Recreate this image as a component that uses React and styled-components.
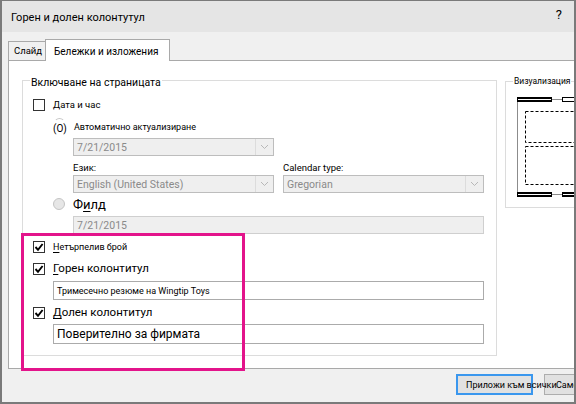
import React from "react";
import styled, { createGlobalStyle } from "styled-components";

const UI_FONT = `Roboto, "Noto Sans", "Liberation Sans", sans-serif`;

const GlobalStyle = createGlobalStyle`
  html, body { margin: 0; padding: 0; background: #ffffff; }
  body { font-family: ${UI_FONT}; color: #000; }
  *, *::before, *::after { box-sizing: border-box; }
`;

/* outer frame of the dialog window (clips the right-hand part of the dialog) */
const Frame = styled.div`
  width: 576px;
  height: 404px;
  border: solid #7a7a7a;
  border-width: 1px 2px 2px 2px;
  overflow: hidden;
  background: #f0f0f0;
`;

const Dialog = styled.div`
  width: 630px;
  display: flex;
  flex-direction: column;
  font-family: ${UI_FONT};
`;

const TitleBar = styled.div`
  height: 31px;
  background: #e5e5e5;
  display: flex;
  align-items: center;
  padding: 2px 0 0 9px;
`;

const Title = styled.div`
  flex: 1;
  font-size: 11px;
  white-space: nowrap;
`;

const Help = styled.div`
  align-self: flex-start;
  margin: 5px 70px 0 0;
  font-size: 13px;
  line-height: 14px;
`;

const Body = styled.div`
  display: flex;
  flex-direction: column;
  padding-top: 7px;
`;

const TabStrip = styled.div`
  display: flex;
  align-items: flex-end;
  height: 21px;
  margin-left: 6px;
`;

const Tab = styled.div`
  position: relative;
  display: flex;
  align-items: center;
  font-size: ${(p) => (p.$active ? 10 : 9.5)}px;
  white-space: nowrap;
  border: 1px solid #a9a9a9;
  border-bottom: none;
  ${(p) =>
    p.$active
      ? `
    z-index: 1;
    width: 125px;
    height: 22px;
    margin-bottom: -1px;
    padding: 1px 0 0 8px;
    background: #ffffff;
  `
      : `
    width: 37px;
    height: 19px;
    border-right: none;
    padding: 0 0 1px 5px;
    background: #f0f0f0;
  `}
`;

const Panel = styled.div`
  position: relative;
  margin-left: 6px;
  width: 614px;
  height: 309px;
  border: 1px solid #a9a9a9;
  background: #ffffff;
  padding: 19px 8px 0 13px;
`;

const Columns = styled.div`
  display: flex;
  align-items: flex-start;
  gap: 8px;
`;

const GroupBox = styled.div`
  position: relative;
  flex: none;
  width: ${(p) => p.$w}px;
  height: ${(p) => p.$h}px;
  margin-top: ${(p) => p.$mt || 0}px;
  border: 1px solid #dcdcdc;
  padding: ${(p) => p.$pad};
  display: flex;
  flex-direction: column;
`;

/* group caption sits over the top border line */
const Caption = styled.span`
  position: absolute;
  top: ${(p) => p.$top}px;
  left: ${(p) => p.$left}px;
  padding: 0 1px;
  background: #ffffff;
  font-size: ${(p) => p.$size}px;
  line-height: 14px;
  white-space: nowrap;
`;

const Row = styled.div`
  display: flex;
  align-items: center;
  gap: 8px;
  height: ${(p) => p.$h}px;
  margin-top: ${(p) => p.$mt}px;
  padding-left: ${(p) => p.$indent}px;
`;

const Label = styled.span`
  font-size: ${(p) => p.$size}px;
  line-height: 1;
  white-space: nowrap;
  u { text-underline-offset: 2px; }
`;

const CheckBox = styled.span`
  flex: none;
  width: 12px;
  height: 12px;
  border: 1px solid #333333;
  background: #ffffff;
  display: flex;
  align-items: center;
  justify-content: center;
`;

const RadioDot = styled.span`
  flex: none;
  width: 12px;
  height: 12px;
  border-radius: 50%;
  border: 1px solid #c4c4c4;
  background: #e6e6e6;
`;

/* radio drawn with a fallback "(O)" glyph under a faint ring */
const RadioText = styled.span`
  position: relative;
  flex: none;
  width: 13px;
  height: 14px;
  font-size: 10px;
  line-height: 1;
  display: flex;
  align-items: flex-end;
  white-space: nowrap;
  &::before {
    content: "";
    position: absolute;
    left: 1px;
    top: -2px;
    width: 11px;
    height: 11px;
    border-radius: 50%;
    border: 1px solid transparent;
    border-top-color: #c8c8c8;
  }
`;

const Combo = styled.div`
  display: flex;
  align-items: center;
  width: ${(p) => p.$w}px;
  height: 18px;
  border: 1px solid #bdbdbd;
  background: #efefef;
  color: #8a8a8a;
  font-size: 10.5px;
  padding-left: 3px;
  white-space: nowrap;
  span { flex: 1; }
`;

const ComboArrow = styled.span`
  flex: none !important;
  width: 18px;
  height: 100%;
  border-left: 1px solid #dcdcdc;
  display: flex;
  align-items: center;
  justify-content: center;
`;

const TextBox = styled.div`
  display: flex;
  align-items: center;
  width: ${(p) => p.$w}px;
  height: ${(p) => p.$h}px;
  margin-top: ${(p) => p.$mt}px;
  margin-left: ${(p) => p.$indent}px;
  border: 1px solid ${(p) => (p.$disabled ? "#cfcfcf" : "#ababab")};
  background: ${(p) => (p.$disabled ? "#efefef" : "#ffffff")};
  color: ${(p) => (p.$disabled ? "#8a8a8a" : "#000000")};
  font-size: ${(p) => p.$size}px;
  padding-left: 3px;
  white-space: nowrap;
`;

const LangGrid = styled.div`
  display: grid;
  grid-template-columns: 201px 201px;
  grid-template-rows: 12px 18px;
  column-gap: 9px;
  row-gap: 1px;
  margin-top: 6px;
  padding-left: 40px;
`;

const SmallLabel = styled.span`
  font-size: 9.5px;
  line-height: 12px;
  white-space: nowrap;
`;

const Preview = styled.svg`
  display: block;
  margin: 15px 0 0 11px;
`;

const Highlight = styled.div`
  position: absolute;
  left: 12px;
  top: 172px;
  width: 224px;
  height: 138px;
  border: 3px solid #e3148b;
  z-index: 2;
  pointer-events: none;
`;

const Footer = styled.div`
  display: flex;
  justify-content: flex-end;
  gap: 11px;
  margin-top: 5px;
  padding-right: 13px;
`;

const Button = styled.div`
  position: relative;
  z-index: ${(p) => (p.$focused ? 1 : 0)};
  flex: none;
  display: flex;
  align-items: center;
  width: ${(p) => p.$w}px;
  height: 21px;
  padding: 0 0 0 ${(p) => p.$pl}px;
  font-size: 9px;
  color: #000;
  background: #e1e1e1;
  border: ${(p) => (p.$focused ? "2px solid #3a97ee" : "1px solid #adadad")};
  white-space: nowrap;
  overflow: visible;
  cursor: default;
`;

const Check = () => (
  <svg width="10" height="10" viewBox="0 0 10 10">
    <polyline points="1.5,5 4,7.8 8.6,2" fill="none" stroke="#000" strokeWidth="1.9" />
  </svg>
);

const Chevron = () => (
  <svg width="9" height="6" viewBox="0 0 9 6">
    <polyline points="1,1 4.5,4.5 8,1" fill="none" stroke="#b8b8b8" strokeWidth="1" />
  </svg>
);

const PageLayout = () => (
  <Preview width="100" height="104" viewBox="0 0 100 104">
    {/* page edges */}
    <line x1="0.5" y1="2" x2="0.5" y2="100" stroke="#8c8c8c" />
    <line x1="34" y1="2.5" x2="46" y2="2.5" stroke="#8c8c8c" />
    <line x1="34" y1="97.5" x2="46" y2="97.5" stroke="#8c8c8c" />
    {/* header placeholders */}
    <rect x="0" y="0" width="35" height="5" fill="#000" />
    <line x1="1" y1="2.5" x2="34" y2="2.5" stroke="#fff" />
    <rect x="45.5" y="0.5" width="60" height="4" fill="#fff" stroke="#000" />
    {/* footer placeholders */}
    <rect x="0" y="95" width="35" height="5" fill="#000" />
    <line x1="1" y1="97.5" x2="34" y2="97.5" stroke="#fff" />
    <rect x="45" y="95" width="60" height="5" fill="#000" />
    <line x1="46" y1="97.5" x2="100" y2="97.5" stroke="#fff" />
    {/* body areas */}
    <rect x="8.5" y="14.5" width="100" height="31" fill="none" stroke="#000" strokeDasharray="3 2" />
    <rect x="8.5" y="49.5" width="100" height="38" fill="none" stroke="#000" strokeDasharray="3 2" />
  </Preview>
);

export default function App() {
  return (
    <>
      <GlobalStyle />
      <Frame>
        <Dialog>
          <TitleBar>
            <Title>Горен и долен колонтутул</Title>
            <Help>?</Help>
          </TitleBar>
          <Body>
            <TabStrip>
              <Tab>Слайд</Tab>
              <Tab $active>Бележки и изложения</Tab>
            </TabStrip>
            <Panel>
              <Columns>
                <GroupBox $w={475} $h={276} $pad="17px 0 0 10px">
                  <Caption $top={-5} $left={7} $size={10.5}>Включване на страницата</Caption>

                  <Row $h={14} $mt={0} $indent={0}>
                    <CheckBox />
                    <Label $size={9.5}>Дата и час</Label>
                  </Row>

                  <Row $h={14} $mt={8} $indent={20}>
                    <RadioText>(O)</RadioText>
                    <Label $size={9}>Автоматично актуализиране</Label>
                  </Row>

                  <Row $h={18} $mt={4} $indent={40}>
                    <Combo $w={201}>
                      <span>7/21/2015</span>
                      <ComboArrow><Chevron /></ComboArrow>
                    </Combo>
                  </Row>

                  <LangGrid>
                    <SmallLabel>Език:</SmallLabel>
                    <SmallLabel>Calendar type:</SmallLabel>
                    <Combo $w={201}>
                      <span>English (United States)</span>
                      <ComboArrow><Chevron /></ComboArrow>
                    </Combo>
                    <Combo $w={201}>
                      <span>Gregorian</span>
                      <ComboArrow><Chevron /></ComboArrow>
                    </Combo>
                  </LangGrid>

                  <Row $h={14} $mt={4} $indent={20}>
                    <RadioDot />
                    <Label $size={13}>Ф<u>и</u>лд</Label>
                  </Row>

                  <TextBox $w={411} $h={18} $mt={5} $indent={40} $size={10.5} $disabled>
                    7/21/2015
                  </TextBox>

                  <Row $h={14} $mt={6} $indent={0}>
                    <CheckBox><Check /></CheckBox>
                    <Label $size={9}><u>Н</u>етърпелив брой</Label>
                  </Row>

                  <Row $h={14} $mt={8} $indent={0}>
                    <CheckBox><Check /></CheckBox>
                    <Label $size={11.5}><u>Г</u>орен колонтитул</Label>
                  </Row>

                  <TextBox $w={431} $h={19} $mt={5} $indent={20} $size={9}>
                    Тримесечно резюме на Wingtip Toys
                  </TextBox>

                  <Row $h={14} $mt={6} $indent={0}>
                    <CheckBox><Check /></CheckBox>
                    <Label $size={11.5}><u>Д</u>олен колонтитул</Label>
                  </Row>

                  <TextBox $w={431} $h={20} $mt={4} $indent={20} $size={12}>
                    Поверително за фирмата
                  </TextBox>
                </GroupBox>

                <GroupBox $w={108} $h={127} $mt={1} $pad="0">
                  <Caption $top={-8} $left={7} $size={8.5}>Визуализация</Caption>
                  <PageLayout />
                </GroupBox>
              </Columns>
              <Highlight />
            </Panel>
            <Footer>
              <Button $w={77} $pl={8} $focused>Приложи към всички</Button>
              <Button $w={75} $pl={11}>Само тук</Button>
            </Footer>
          </Body>
        </Dialog>
      </Frame>
    </>
  );
}
